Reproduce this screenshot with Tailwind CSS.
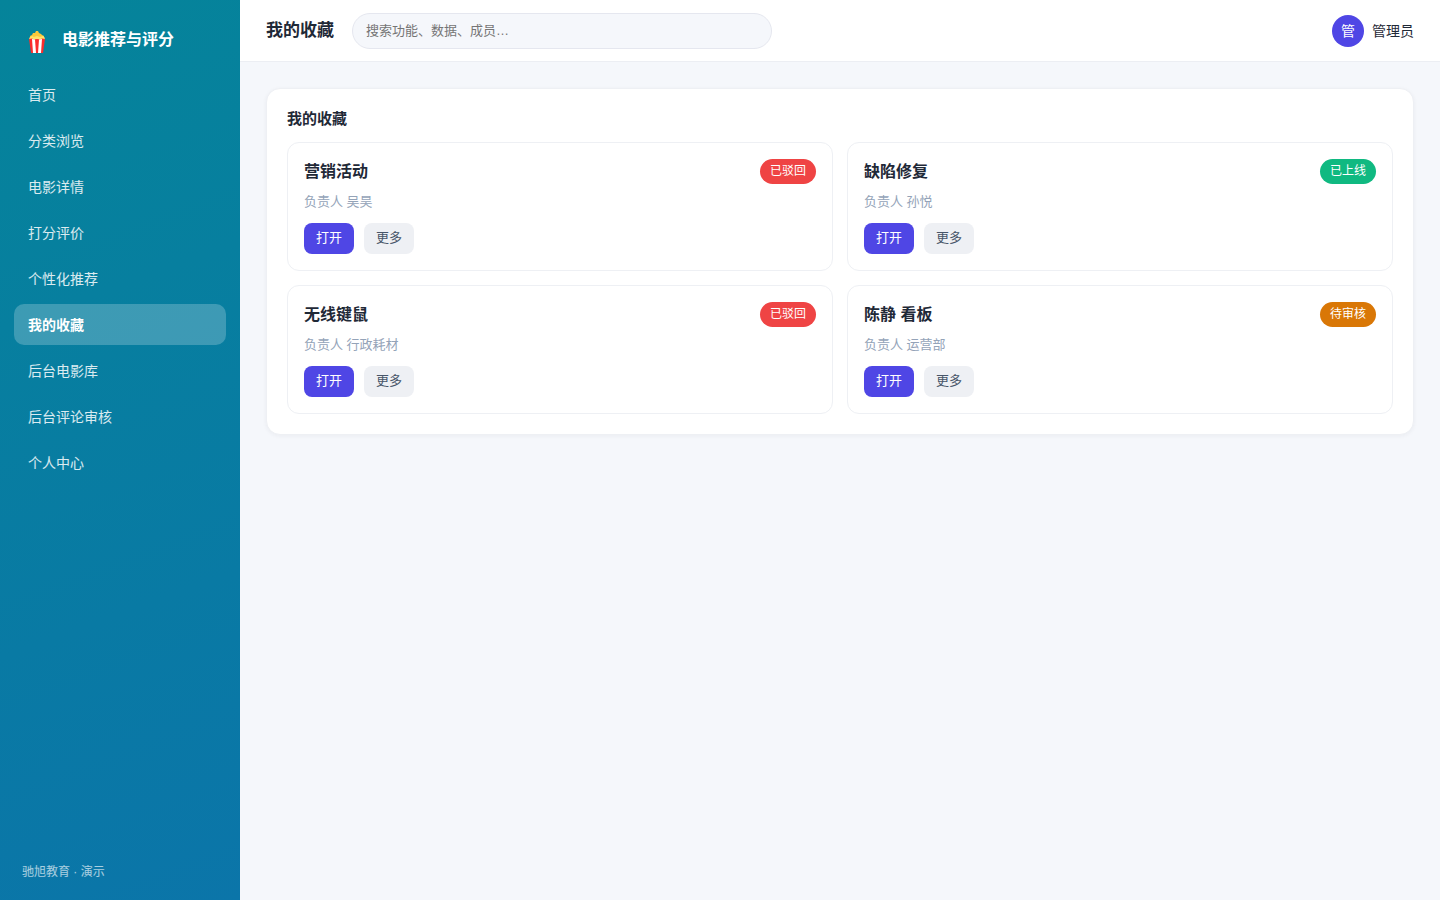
<!DOCTYPE html>
<html lang="zh-CN">
<head>
    <meta charset="UTF-8">
    <meta name="viewport" content="width=device-width, initial-scale=1.0">
    <title>我的收藏 - 电影推荐与评分</title>
    <script src="https://cdn.jsdelivr.net/npm/@tailwindcss/browser@4"></script>
</head>
<body class="flex min-h-screen bg-[#f5f7fb] text-[#1f2937] text-sm font-['Liberation_Sans','Noto_Sans_CJK_SC',sans-serif]">

    <!-- Sidebar -->
    <aside class="w-60 shrink-0 flex flex-col px-[14px] py-5 text-white bg-linear-[160deg,#05849a,#0b75a9]">
        <div class="flex items-center h-10 mb-[14px] pl-[14px] gap-4">
            <svg class="w-[18px] h-6 mt-1" viewBox="0 0 18 24" aria-hidden="true">
                <path d="M2 8 L2 6 L4 5 L5 3 L7 3 L8 1 L10 1 L11 3 L13 4 L14 5 L16 6 L16 9 L2 9 Z" fill="#fdc93a"/>
                <path d="M1 8 L4 6 L6 7 L9 6 L12 7 L15 6 L17 8 L16 10 L2 10 Z" fill="#ffe36b"/>
                <path d="M1 9 L4 8.500 L6 9.500 L9 9 L12 9.500 L14 8.500 L17 9 L15 23 L3 23 Z" fill="#fb2c2c"/>
                <path d="M4 9 L7 9.500 L8 23 L5 23 Z M11 9.500 L14 9 L13 23 L10 23 Z" fill="#fff"/>
            </svg>
            <span class="text-base font-bold">电影推荐与评分</span>
        </div>

        <nav class="flex flex-col gap-[5px] text-white/85">
            <a href="#" class="flex items-center h-[41px] px-[14px] rounded-[10px]">首页</a>
            <a href="#" class="flex items-center h-[41px] px-[14px] rounded-[10px]">分类浏览</a>
            <a href="#" class="flex items-center h-[41px] px-[14px] rounded-[10px]">电影详情</a>
            <a href="#" class="flex items-center h-[41px] px-[14px] rounded-[10px]">打分评价</a>
            <a href="#" class="flex items-center h-[41px] px-[14px] rounded-[10px]">个性化推荐</a>
            <a href="#" class="flex items-center h-[41px] px-[14px] rounded-[10px] bg-white/22 text-white font-bold">我的收藏</a>
            <a href="#" class="flex items-center h-[41px] px-[14px] rounded-[10px]">后台电影库</a>
            <a href="#" class="flex items-center h-[41px] px-[14px] rounded-[10px]">后台评论审核</a>
            <a href="#" class="flex items-center h-[41px] px-[14px] rounded-[10px]">个人中心</a>
        </nav>

        <p class="mt-auto px-2 text-xs text-white/65">驰旭教育 · 演示</p>
    </aside>

    <div class="flex-1 min-w-0">
        <!-- Top bar -->
        <header class="flex items-center py-3 h-[62px] px-[26px] bg-white border-b border-[#eceef3]">
            <h1 class="text-[17px] leading-7 font-bold">我的收藏</h1>
            <input type="search" aria-label="搜索" placeholder="搜索功能、数据、成员…"
                   class="ml-[18px] w-[420px] h-9 px-[13px] rounded-full border border-[#e5e7ef] bg-[#f5f7fb] text-[13px] placeholder:text-[#757575]">
            <div class="ml-auto flex items-center gap-2">
                <span class="flex items-center justify-center size-8 rounded-full bg-[#4f46e5] text-white">管</span>
                <span>管理员</span>
            </div>
        </header>

        <!-- Favorites -->
        <main class="p-[26px]">
            <section class="p-5 bg-white border border-[#eef0f4] rounded-[14px] shadow-[0_1px_4px_rgba(31,41,55,0.05)]">
                <h2 class="mb-[13px] text-[15px] leading-5 font-bold">我的收藏</h2>
                <div class="grid grid-cols-2 gap-[14px]">
                    <article class="p-4 border border-[#eef0f4] rounded-xl">
                        <div class="flex items-center justify-between h-[25px]">
                            <h3 class="text-base font-bold">营销活动</h3>
                            <span class="px-[10px] text-xs leading-[25px] rounded-full bg-[#ef4444] text-white">已驳回</span>
                        </div>
                        <p class="mt-2 text-[13px] leading-5 text-[#94a3b8]">负责人 吴昊</p>
                        <div class="flex gap-[10px] mt-[11px] text-[13px]">
                            <button type="button" class="h-[31px] px-3 rounded-lg bg-[#4f46e5] text-white">打开</button>
                            <button type="button" class="h-[31px] px-3 rounded-lg bg-[#eef0f4] text-[#475569]">更多</button>
                        </div>
                    </article>

                    <article class="p-4 border border-[#eef0f4] rounded-xl">
                        <div class="flex items-center justify-between h-[25px]">
                            <h3 class="text-base font-bold">缺陷修复</h3>
                            <span class="px-[10px] text-xs leading-[25px] rounded-full bg-[#10b981] text-white">已上线</span>
                        </div>
                        <p class="mt-2 text-[13px] leading-5 text-[#94a3b8]">负责人 孙悦</p>
                        <div class="flex gap-[10px] mt-[11px] text-[13px]">
                            <button type="button" class="h-[31px] px-3 rounded-lg bg-[#4f46e5] text-white">打开</button>
                            <button type="button" class="h-[31px] px-3 rounded-lg bg-[#eef0f4] text-[#475569]">更多</button>
                        </div>
                    </article>

                    <article class="p-4 border border-[#eef0f4] rounded-xl">
                        <div class="flex items-center justify-between h-[25px]">
                            <h3 class="text-base font-bold">无线键鼠</h3>
                            <span class="px-[10px] text-xs leading-[25px] rounded-full bg-[#ef4444] text-white">已驳回</span>
                        </div>
                        <p class="mt-2 text-[13px] leading-5 text-[#94a3b8]">负责人 行政耗材</p>
                        <div class="flex gap-[10px] mt-[11px] text-[13px]">
                            <button type="button" class="h-[31px] px-3 rounded-lg bg-[#4f46e5] text-white">打开</button>
                            <button type="button" class="h-[31px] px-3 rounded-lg bg-[#eef0f4] text-[#475569]">更多</button>
                        </div>
                    </article>

                    <article class="p-4 border border-[#eef0f4] rounded-xl">
                        <div class="flex items-center justify-between h-[25px]">
                            <h3 class="text-base font-bold">陈静 看板</h3>
                            <span class="px-[10px] text-xs leading-[25px] rounded-full bg-[#d97706] text-white">待审核</span>
                        </div>
                        <p class="mt-2 text-[13px] leading-5 text-[#94a3b8]">负责人 运营部</p>
                        <div class="flex gap-[10px] mt-[11px] text-[13px]">
                            <button type="button" class="h-[31px] px-3 rounded-lg bg-[#4f46e5] text-white">打开</button>
                            <button type="button" class="h-[31px] px-3 rounded-lg bg-[#eef0f4] text-[#475569]">更多</button>
                        </div>
                    </article>
                </div>
            </section>
        </main>
    </div>
</body>
</html>
